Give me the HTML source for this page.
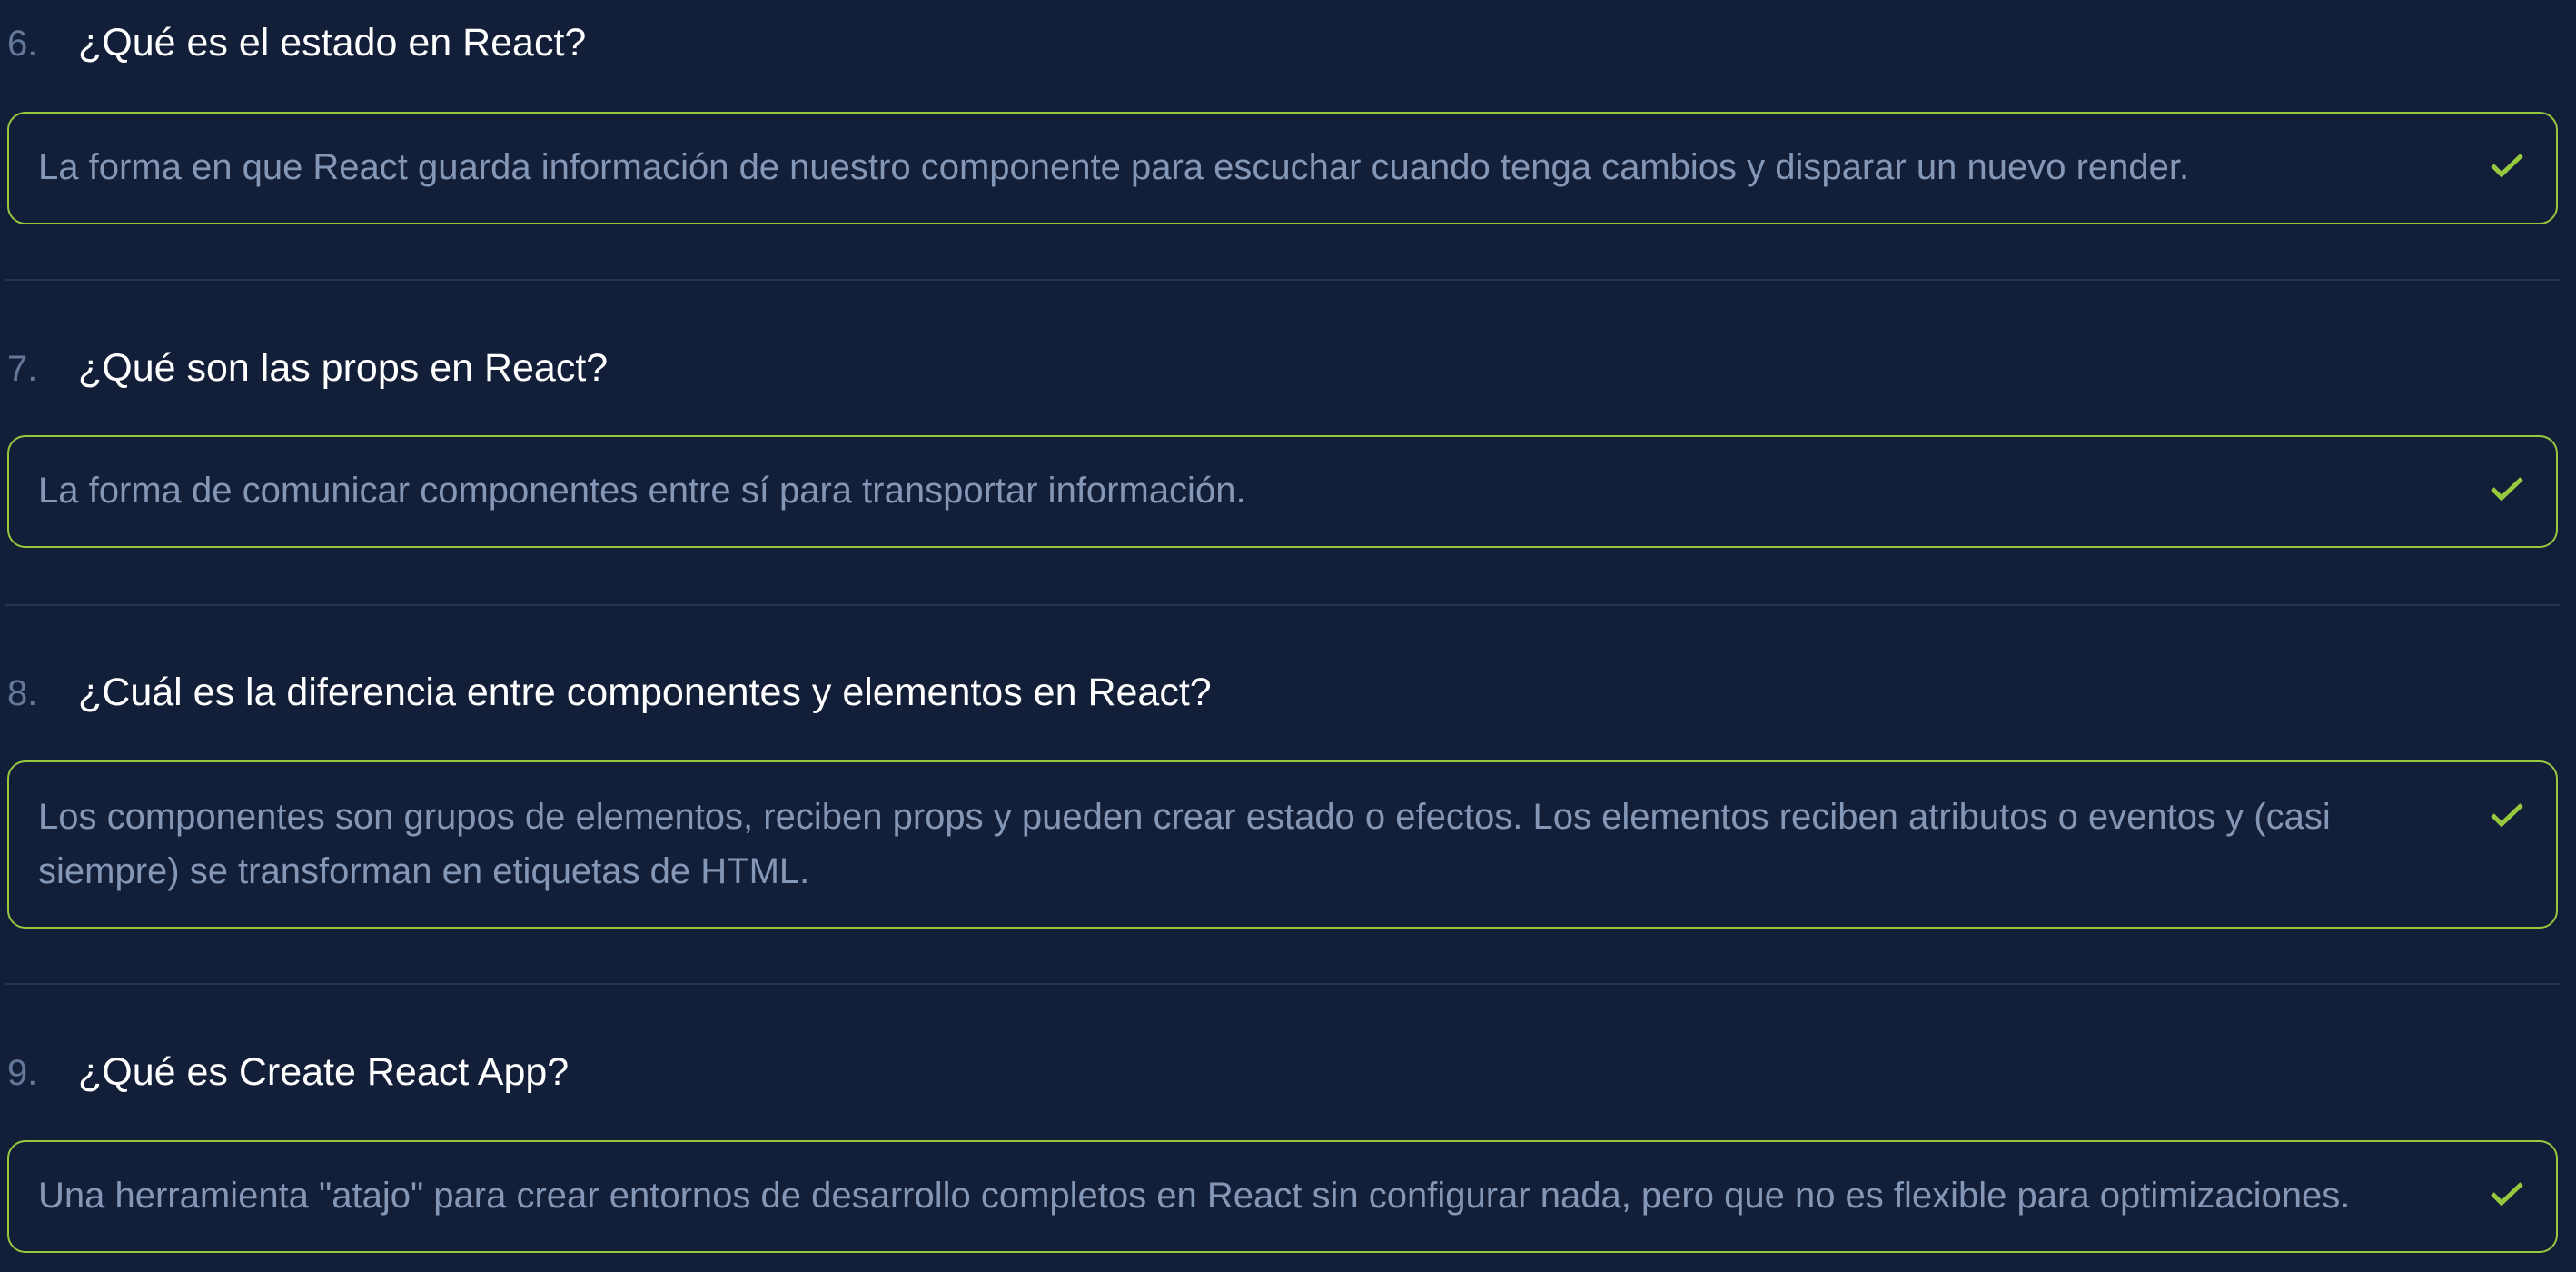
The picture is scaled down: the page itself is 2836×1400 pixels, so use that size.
<!DOCTYPE html>
<html><head><meta charset="utf-8"><style>
html,body{margin:0;padding:0;background:#131f38;width:2836px;height:1400px;overflow:hidden;font-family:"Liberation Sans",Arial,sans-serif}
.h{position:absolute;left:0;white-space:nowrap;font-size:43px;color:#fff;line-height:50px}
.h span{color:#64789a;display:inline-block;width:86px;padding-left:8px;box-sizing:border-box;font-size:40px}
.box{position:absolute;left:8px;width:2808px;border:2.5px solid #97c93f;border-radius:20px;box-sizing:border-box}
.t{position:absolute;left:32px;color:#8597b6;font-size:40px;line-height:60px;white-space:nowrap}
.ck{position:absolute;right:34px;width:40px;height:32px}
.d{position:absolute;left:6px;width:2812px;height:2px;background:#27344f}
</style></head><body>
<div class="h" style="top:22px"><span>6.</span>¿Qué es el estado en React?</div>
<div class="box" style="top:123px;height:124px"><div class="t" style="top:29px">La forma en que React guarda información de nuestro componente para escuchar cuando tenga cambios y disparar un nuevo render.</div>
<svg class="ck" style="top:42px" viewBox="0 0 40 32"><path d="M4 15 L14 25 L36 4" fill="none" stroke="#97c93f" stroke-width="5"/></svg></div>
<div class="d" style="top:307px"></div>

<div class="h" style="top:380px"><span>7.</span>¿Qué son las props en React?</div>
<div class="box" style="top:479px;height:124px"><div class="t" style="top:29px">La forma de comunicar componentes entre sí para transportar información.</div>
<svg class="ck" style="top:42px" viewBox="0 0 40 32"><path d="M4 15 L14 25 L36 4" fill="none" stroke="#97c93f" stroke-width="5"/></svg></div>
<div class="d" style="top:665px"></div>

<div class="h" style="top:737px"><span>8.</span>¿Cuál es la diferencia entre componentes y elementos en React?</div>
<div class="box" style="top:837px;height:185px"><div class="t" style="top:30px">Los componentes son grupos de elementos, reciben props y pueden crear estado o efectos. Los elementos reciben atributos o eventos y (casi<br>siempre) se transforman en etiquetas de HTML.</div>
<svg class="ck" style="top:43px" viewBox="0 0 40 32"><path d="M4 15 L14 25 L36 4" fill="none" stroke="#97c93f" stroke-width="5"/></svg></div>
<div class="d" style="top:1082px"></div>

<div class="h" style="top:1155px"><span>9.</span>¿Qué es Create React App?</div>
<div class="box" style="top:1255px;height:124px"><div class="t" style="top:29px">Una herramienta "atajo" para crear entornos de desarrollo completos en React sin configurar nada, pero que no es flexible para optimizaciones.</div>
<svg class="ck" style="top:42px" viewBox="0 0 40 32"><path d="M4 15 L14 25 L36 4" fill="none" stroke="#97c93f" stroke-width="5"/></svg></div>
</body></html>
